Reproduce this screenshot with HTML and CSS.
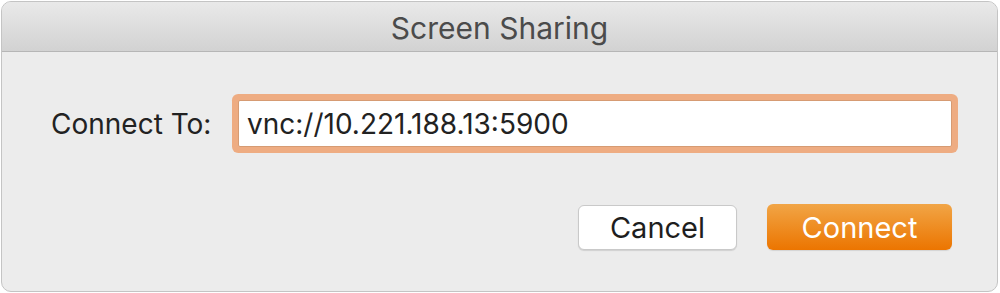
FILE: index.html
```html
<!DOCTYPE html>
<html lang="en">
<head>
    <meta charset="UTF-8">
    <meta name="viewport" content="width=device-width, initial-scale=1.0">
    <title>Screen Sharing</title>
    <link rel="stylesheet" href="styles.css">
</head>
<body>
    <div class="window">
        <div class="titlebar">Screen Sharing</div>
        <div class="content">
            <div class="form-row">
                <label for="address" class="field-label">Connect To:</label>
                <input type="text" id="address" class="address-input" value="vnc://10.221.188.13:5900">
            </div>
            <div class="actions">
                <button class="btn btn-cancel">Cancel</button>
                <button class="btn btn-primary">Connect</button>
            </div>
        </div>
    </div>
</body>
</html>
```

FILE: styles.css
```css
* {
    box-sizing: border-box;
}

body {
    margin: 0;
    padding: 1px;
    background-color: #fff;
    font-family: Inter, 'Liberation Sans', sans-serif;
    color: #262626;
}

.window {
    width: 997px;
    height: 291px;
    border: 1px solid #c4c4c4;
    border-radius: 10px;
    background-color: #ececec;
    overflow: hidden;
    display: flex;
    flex-direction: column;
}

.titlebar {
    height: 50px;
    border-bottom: 1px solid #b6b6b6;
    background: linear-gradient(to bottom, #e9e9e9, #d2d2d2);
    display: flex;
    align-items: center;
    justify-content: center;
    padding-top: 2px;
    font-size: 30px;
    color: #4b4b4b;
}

.content {
    flex: 1;
    padding: 48px 45px 0 49px;
}

.form-row {
    display: flex;
    align-items: center;
}

.field-label {
    width: 187px;
    font-size: 28px;
    color: #222;
}

.address-input {
    flex: 1;
    height: 47px;
    border: 1px solid #d69b73;
    border-radius: 2px;
    padding: 0 8px;
    font-family: inherit;
    font-size: 28px;
    color: #222;
    box-shadow: 0 0 0 6px #eeac82;
    outline: none;
}

.actions {
    display: flex;
    justify-content: flex-end;
    gap: 30px;
    margin-top: 58px;
}

.btn {
    height: 45px;
    border-radius: 6px;
    font-family: inherit;
    font-size: 29px;
}

.btn-cancel {
    width: 159px;
    background-color: #fff;
    color: #1e1e1e;
    border: 1px solid #c9c9c9;
    box-shadow: 0 1px 1px rgba(0, 0, 0, 0.12);
}

.btn-primary {
    width: 185px;
    height: 46px;
    margin-top: -1px;
    color: #fff;
    border: none;
    background: linear-gradient(to bottom, #f1a546, #ec7500);
    box-shadow: 0 1px 1px rgba(0, 0, 0, 0.1);
}
```
